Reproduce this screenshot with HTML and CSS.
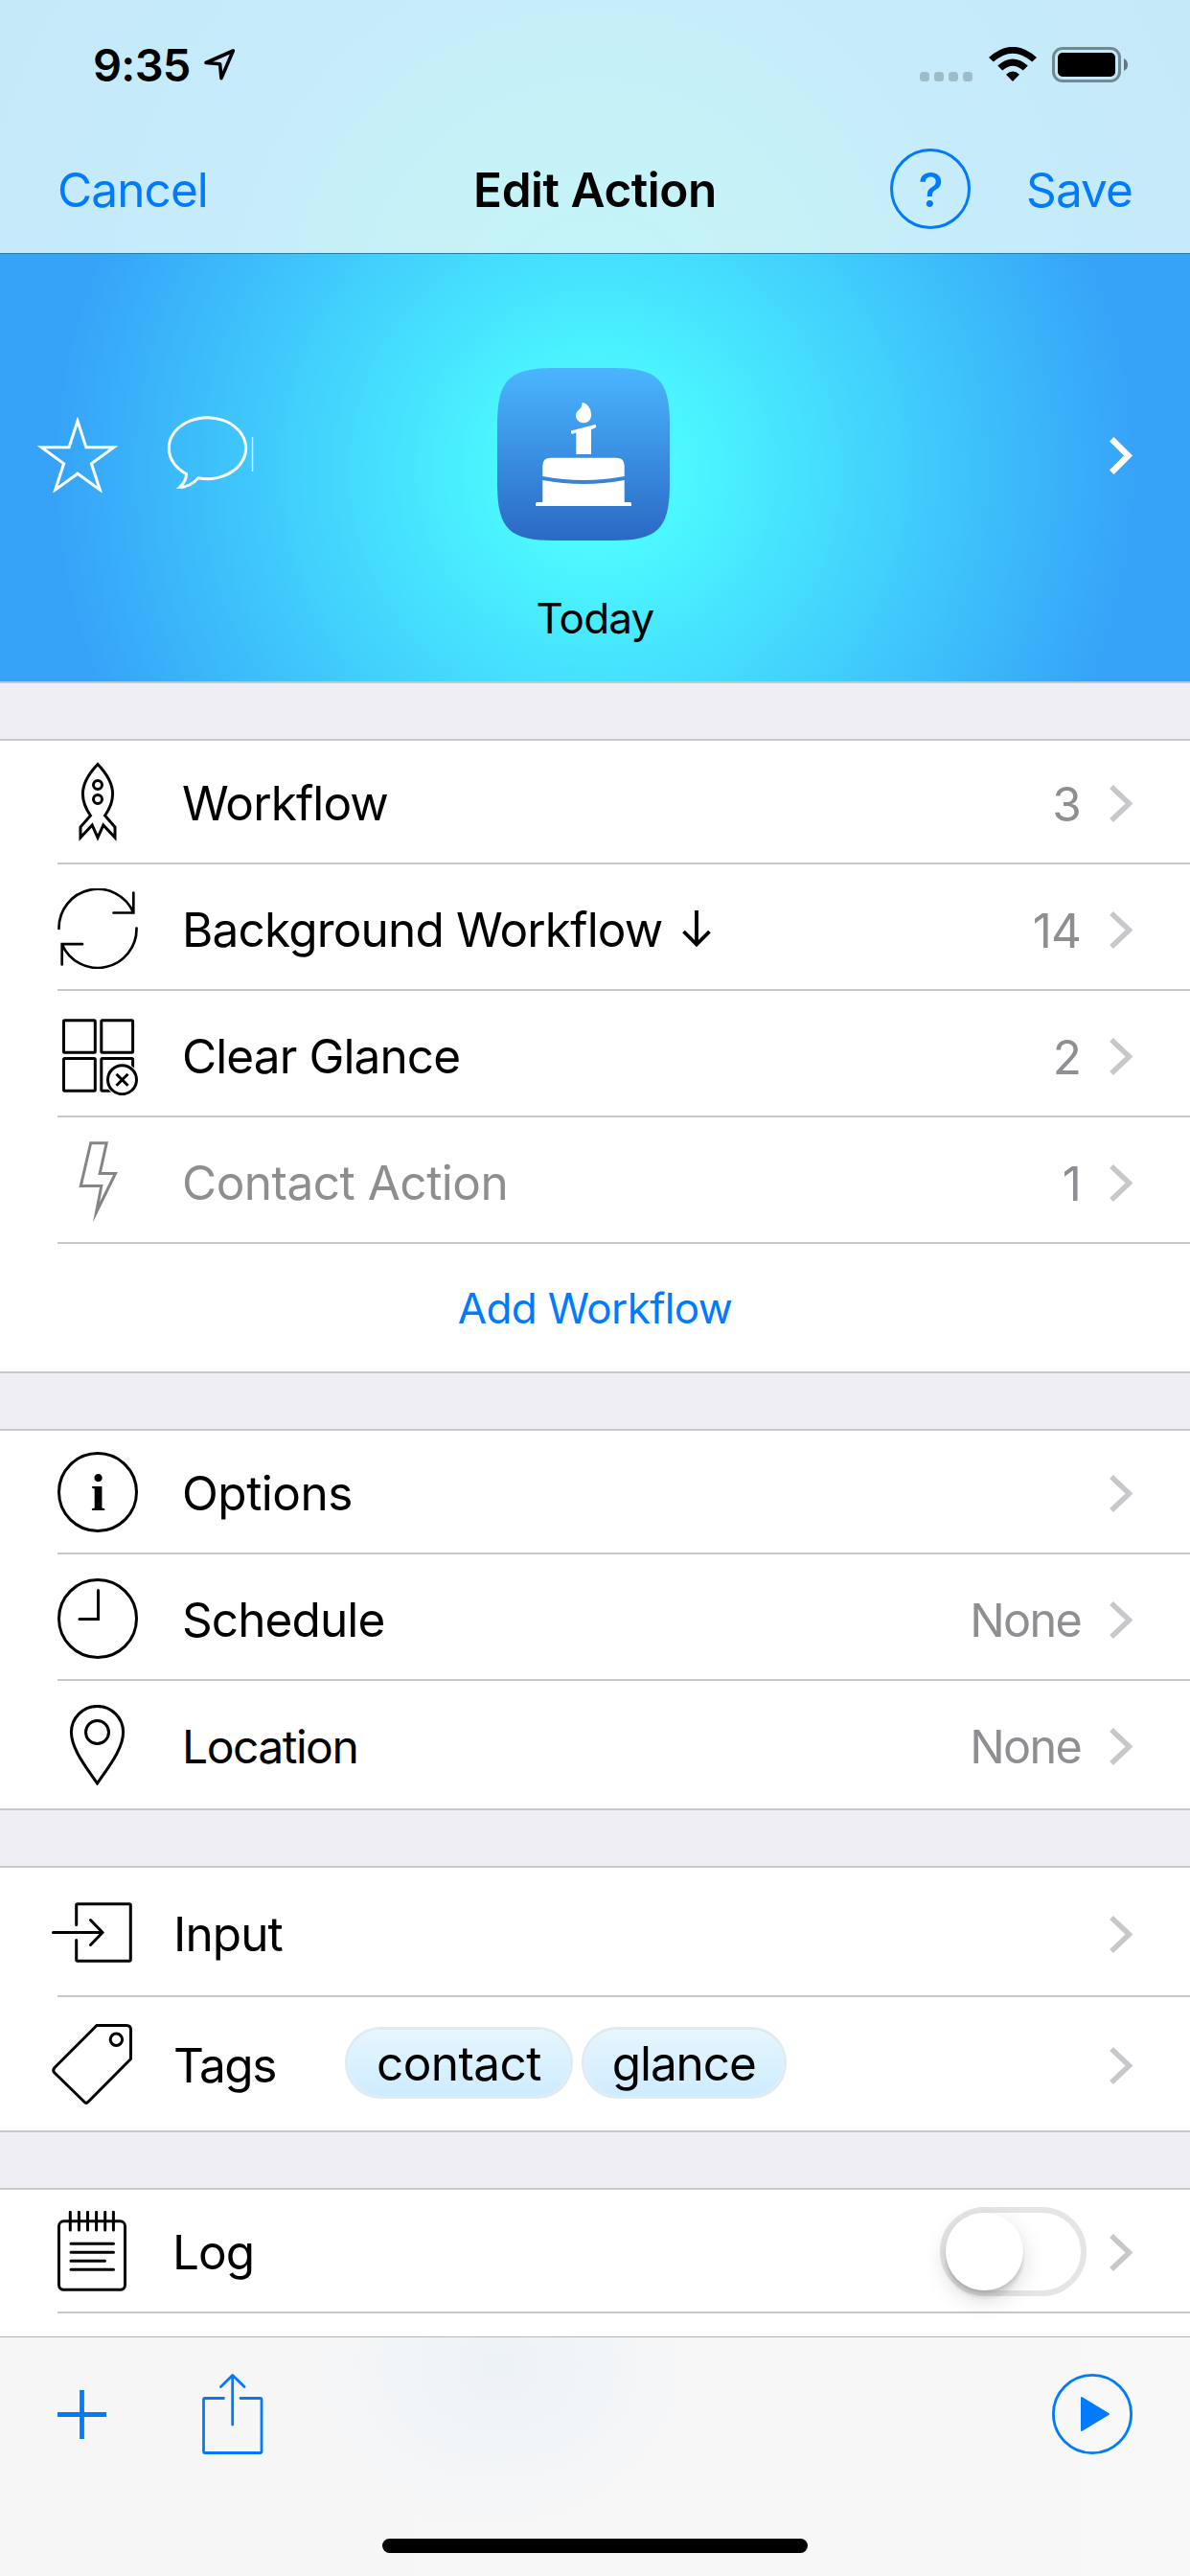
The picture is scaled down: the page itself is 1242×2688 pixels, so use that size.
FILE: index.html
```html
<!DOCTYPE html>
<html lang="en">
<head>
<meta charset="utf-8">
<title>Edit Action</title>
<link rel="stylesheet" href="styles.css">
</head>
<body>
<svg class="defs" width="0" height="0" aria-hidden="true">
  <symbol id="chevron" viewBox="0 0 24 39"><path d="M2 2 L20.5 19.5 L2 37" fill="none" stroke="currentColor" stroke-width="5.4"/></symbol>
</svg>
<div class="screen">
  <header class="top">
    <div class="status">
      <div class="clock">
        <span class="time">9:35</span>
        <svg class="locarrow" width="34" height="36" viewBox="0 0 34 36"><path d="M31.3 3 L3 15.5 L17.6 16.8 L19 31.6 Z" fill="none" stroke="#000" stroke-width="3.6" stroke-linejoin="round"/></svg>
      </div>
      <div class="indicators">
        <div class="dots"><i></i><i></i><i></i><i></i></div>
        <svg width="50" height="37" viewBox="0 0 50 37">
          <path d="M0 11 Q25 -11.5 50 11 L45.2 15.6 Q25 -2.200 4.800 15.600 Z"/>
          <path d="M9.200 19.600 Q25 5.500 40.800 19.600 L35.800 24.500 Q25 14.800 14.200 24.500 Z"/>
          <path d="M18 28.700 Q25 22.500 32 28.700 L25 36 Z"/>
        </svg>
        <svg width="80" height="38" viewBox="0 0 80 38">
          <rect x="1.500" y="1.500" width="69" height="34" rx="9.500" fill="none" stroke="#000" stroke-opacity=".42" stroke-width="3"/>
          <rect x="6" y="6" width="60" height="25" rx="5"/>
          <path d="M75 12 Q79 14 79 18.500 Q79 23 75 25 Z" fill-opacity=".5"/>
        </svg>
      </div>
    </div>
    <nav class="nav">
      <span class="link">Cancel</span>
      <h1 class="title">Edit Action</h1>
      <div class="nav-right">
        <span class="help">?</span>
        <span class="link save">Save</span>
      </div>
    </nav>
  </header>

  <section class="hero">
    <div class="hero-row">
      <svg class="star" width="84" height="79" viewBox="0 0 84 79"><path d="M42 4.300 L50.900 31.700 L79.800 31.700 L56.400 48.700 L65.300 76.100 L42 59.200 L18.700 76.100 L27.600 48.700 L4.200 31.700 L33.100 31.700 Z" fill="none" stroke="#fff" stroke-width="3" stroke-miterlimit="10"/></svg>
      <svg class="bubble" width="92" height="80" viewBox="0 0 92 80"><path d="M20.500 60.500 A40.200 32 0 1 1 33 64.800 Q24 74.500 13.500 74.500 Q20.500 68 20.500 60.500 Z" fill="none" stroke="#fff" stroke-width="3"/><path d="M89.500 22 V58" stroke="#fff" stroke-width="1.400"/></svg>
      <svg class="app" width="180" height="180" viewBox="0 0 180 180">
        <defs><linearGradient id="sky" x1="0" y1="0" x2="0" y2="1"><stop offset="0" stop-color="#4ab6ff"/><stop offset="1" stop-color="#2a69c5"/></linearGradient></defs>
        <path d="M60 0 H120 C168 0 180 12 180 60 V120 C180 168 168 180 120 180 H60 C12 180 0 168 0 120 V60 C0 12 12 0 60 0 Z" fill="url(#sky)"/>
        <g fill="#fff">
          <path d="M88.500 36 C95 37 98 43 98 49 C98 54.500 94.500 57.300 90.200 57.300 C85.500 57.300 82 54 82 49.500 C82 43.500 89.500 43 88.500 36 Z"/>
          <path d="M77 65.500 L102 59 Q103.500 59 103 62 L98 64.200 V90 H82.300 V67.500 L78 69 Q76.500 67.500 77 65.500 Z"/>
          <path d="M47.300 113 V102 Q47.300 93.700 56 93.700 H124 Q132.700 93.700 132.700 102 V113 Q90 121 47.300 113 Z"/>
          <path d="M47.300 117 Q90 124.800 132.700 117 V140 H138.500 Q140 140 140 141.500 V144 H40 V141.500 Q40 140 41.500 140 H47.300 Z"/>
        </g>
      </svg>
      <svg class="hero-chev" width="24" height="39" viewBox="0 0 24 39"><path d="M2.300 2.300 L19.500 19.500 L2.300 36.700" fill="none" stroke="#fff" stroke-width="6.400"/></svg>
    </div>
    <div class="hero-name">Today</div>
  </section>

  <main class="list">
    <section class="group">
      <div class="row first">
        <svg class="icon" viewBox="0 0 84 84"><path d="M42 2.500 C30 15 26.400 25 26.400 33.500 C26.400 42 29.500 49 34.500 56 L24 68 V79 L36.200 66 L42 79 L47.800 66 L60 79 V68 L49.500 56 C54.500 49 57.600 42 57.600 33.500 C57.600 25 54 15 42 2.500 Z"/><circle cx="42" cy="24" r="4.500"/><circle cx="42" cy="39" r="4.500"/></svg>
        <span class="label">Workflow</span><span class="value">3</span><svg class="chev"><use href="#chevron"/></svg>
      </div>
      <div class="row">
        <svg class="icon" viewBox="0 0 84 84"><path d="M1.500 42 A40.500 40.500 0 0 1 79.300 25.500 M79.300 4.500 V25.500 H58.500 M82.500 41.500 A40.500 40.500 0 0 1 4.700 58.200 M4.700 79.500 V58.200 H26" stroke-linecap="round" stroke-width="2.700"/></svg>
        <span class="label background">Background Workflow</span>
        <svg class="down" width="32" height="38" viewBox="0 0 32 38"><path d="M16 0 V35 M2.500 22 L16 35.500 L29.500 22" fill="none" stroke="#000" stroke-width="3.800"/></svg>
        <span class="value">14</span><svg class="chev"><use href="#chevron"/></svg>
      </div>
      <div class="row">
        <svg class="icon" viewBox="0 0 84 84"><rect x="6.500" y="5.700" width="32.800" height="33.500" rx="1"/><rect x="45.800" y="5.700" width="32.800" height="33.500" rx="1"/><rect x="6.500" y="45.500" width="32.800" height="33.800" rx="1"/><rect x="45.800" y="45.500" width="32.800" height="33.800" rx="1"/><circle cx="67.500" cy="67.700" r="15.500" fill="#fff" stroke="#fff" stroke-width="4"/><circle cx="67.500" cy="67.700" r="15"/><path d="M61.500 61.700 l12 12 M73.500 61.700 l-12 12"/></svg>
        <span class="label">Clear Glance</span><span class="value">2</span><svg class="chev"><use href="#chevron"/></svg>
      </div>
      <div class="row disabled">
        <svg class="icon" viewBox="0 0 84 84"><path d="M34.700 1.700 H51.200 L44.200 33.500 H60.500 L40.500 74 L45.800 46.500 H24.300 Z" stroke-miterlimit="12"/></svg>
        <span class="label wide">Contact Action</span><span class="value">1</span><svg class="chev"><use href="#chevron"/></svg>
      </div>
      <div class="row add"><span>Add Workflow</span></div>
    </section>

    <section class="group">
      <div class="row first">
        <svg class="icon" viewBox="0 0 84 84"><circle cx="42" cy="42" r="40.500"/><text x="42" y="61" class="info">i</text></svg>
        <span class="label wide">Options</span><span class="value"></span><svg class="chev"><use href="#chevron"/></svg>
      </div>
      <div class="row">
        <svg class="icon" viewBox="0 0 84 84"><circle cx="42" cy="42" r="40.500"/><path d="M42.500 12.500 V42.500 H23" stroke-linecap="round"/></svg>
        <span class="label">Schedule</span><span class="value none">None</span><svg class="chev"><use href="#chevron"/></svg>
      </div>
      <div class="row last">
        <svg class="icon" viewBox="0 0 84 84"><path d="M41.500 82 C30 65 14.400 46 14.400 28.500 A27.100 27.100 0 0 1 68.600 28.500 C68.600 46 53 65 41.500 82 Z"/><circle cx="41.500" cy="28.500" r="12"/></svg>
        <span class="label location">Location</span><span class="value none">None</span><svg class="chev"><use href="#chevron"/></svg>
      </div>
    </section>

    <section class="group shifted">
      <div class="row input">
        <svg class="icon" viewBox="0 0 84 84"><path d="M25.700 33.500 V13 Q25.700 11.700 27 11.700 H81 Q82.300 11.700 82.300 13 V70 Q82.300 71.300 81 71.300 H27 Q25.700 71.300 25.700 70 V49.500 M1.500 41.500 H53 M40.500 28.500 L53 41.500 L40.500 54.500" stroke-linecap="round"/></svg>
        <span class="label">Input</span><span class="value"></span><svg class="chev"><use href="#chevron"/></svg>
      </div>
      <div class="row tags">
        <svg class="icon" viewBox="0 0 84 84"><path d="M47 1.500 H78 Q82.500 1.500 82.500 6 V36.500 L38 81.300 Q36 83.300 34 81.300 L3 51 Q.500 48.500 3 45.500 Z"/><circle cx="67.400" cy="16.300" r="6.200"/></svg>
        <span class="label">Tags</span>
        <div class="pills"><span class="pill">contact</span><span class="pill narrow">glance</span></div>
        <svg class="chev"><use href="#chevron"/></svg>
      </div>
    </section>

    <section class="group cut">
      <div class="row first log">
        <svg class="icon" viewBox="0 0 84 84"><rect x="1.500" y="10.800" width="69" height="71.500" rx="5"/><path d="M13.300 1.300 V20 M22.400 1.300 V20 M31.500 1.300 V20 M40.600 1.300 V20 M49.700 1.300 V20 M58.400 1.300 V20 M14 34.300 H58.500 M14 43.300 H58.500 M14 52.300 H49.500 M14 61.300 H58.500" stroke-linecap="round"/></svg>
        <span class="label">Log</span><span class="switch"><span class="knob"></span></span><svg class="chev"><use href="#chevron"/></svg>
      </div>
    </section>
  </main>

  <footer class="toolbar">
    <div class="tools">
      <svg width="51" height="51" viewBox="0 0 51 51"><path d="M25.500 0 V51 M0 25.500 H51" stroke="#007aff" stroke-width="4.800"/></svg>
      <svg class="share" width="64" height="84" viewBox="0 0 64 84"><path d="M22.500 25.500 H3 Q1.500 25.500 1.500 27 V81 Q1.500 82.500 3 82.500 H60.500 Q62 82.500 62 81 V27 Q62 25.500 60.500 25.500 H40 M31.700 53 V2 M19.500 13.500 L31.700 1.500 L44 13.500" fill="none" stroke="#007aff" stroke-width="2.800" stroke-linecap="round" stroke-linejoin="round"/></svg>
      <svg class="play" width="84" height="84" viewBox="0 0 84 84"><circle cx="42" cy="42" r="40.600" fill="none" stroke="#007aff" stroke-width="2.800"/><path d="M31 25 L59 42 L31 59 Z" fill="#007aff" stroke="#007aff" stroke-width="2" stroke-linejoin="round"/></svg>
    </div>
    <div class="home"></div>
  </footer>
</div>
</body>
</html>
```
FILE: styles.css
```css
* { box-sizing: border-box; }
body {
  margin: 0;
  background: #efeef4;
  font-family: Inter, "Liberation Sans", sans-serif;
  font-size: 49.5px;
  line-height: 60px;
  letter-spacing: -0.9px;
  color: #000;
}
.defs { position: absolute; }
svg { display: block; flex: none; }
.screen {
  width: 1242px;
  height: 2688px;
  display: flex;
  flex-direction: column;
  overflow: hidden;
}

/* Status bar and navigation */
.top {
  height: 265px;
  flex: none;
  border-bottom: 1px solid #2b7ea6;
  background: radial-gradient(circle at 621px 330px, #c4f6f7 0, #c6f0f8 280px, #c6ebfa 420px, #c5e8f9 800px);
}
.status {
  height: 132px;
  display: flex;
  justify-content: space-between;
  padding: 49px 64px 0 97px;
}
.clock { display: flex; gap: 13px; height: 38px; align-items: center; }
.time { font-weight: 600; font-size: 47px; letter-spacing: -0.7px; line-height: 38px; }
.indicators { display: flex; height: 38px; align-items: flex-start; }
.dots { display: flex; gap: 5px; padding-top: 26px; margin-right: 17px; }
.dots i { width: 10px; height: 10px; border-radius: 3.5px; background: rgba(0, 0, 0, 0.2); }
.dots + svg { margin-right: 16px; }
.nav {
  height: 130px;
  display: grid;
  grid-template-columns: 1fr auto 1fr;
  align-items: center;
  padding: 0 60px;
}
.link { color: #007aff; padding-top: 1px; }
.title { margin: 0; font-size: 49.5px; font-weight: 600; padding-top: 2px; letter-spacing: -0.45px; }
.nav-right { display: flex; justify-content: flex-end; align-items: center; gap: 58px; }
.help {
  width: 84px;
  height: 84px;
  border: 3px solid #007aff;
  border-radius: 50%;
  color: #007aff;
  font-weight: 500;
  text-align: center;
  line-height: 80px;
}

/* Coloured banner */
.hero {
  height: 448px;
  flex: none;
  padding-top: 119px;
  border-bottom: 2px solid #c8c7cc;
  background: radial-gradient(circle at 621px 226px, #4cfaff 0, #4cf9ff 85px, #36a3f8 565px);
}
.hero-row { height: 180px; display: flex; align-items: center; padding: 0 60px 0 39px; }
.bubble { margin-left: 51px; }
.app { margin-left: 253px; }
.hero-chev { margin-left: auto; margin-top: 2px; }
.hero-name { margin-top: 51px; text-align: center; font-size: 44px; letter-spacing: -0.8px; }

/* Grouped rows */
.list { flex: 1; min-height: 0; overflow: hidden; padding-top: 58px; }
.group {
  background: #fff;
  border-top: 2px solid #c8c7cc;
  border-bottom: 2px solid #c8c7cc;
  margin-bottom: 58px;
}
.row {
  height: 132px;
  margin-left: 60px;
  padding: 4px 60px 0 0;
  border-bottom: 2px solid #c8c7cc;
  display: flex;
  align-items: center;
}
.row.first { height: 129px; padding-top: 1px; }
.icon { width: 84px; height: 84px; fill: none; stroke: #000; stroke-width: 3; }
.icon .info {
  font: bold 55px "Liberation Serif", serif;
  text-anchor: middle;
  fill: #000;
  stroke: none;
}
.label { margin-left: 46px; padding-top: 2px; white-space: nowrap; }
.label.wide { letter-spacing: -0.5px; }
.label.background { letter-spacing: -0.83px; }
.label.location { font-size: 48px; letter-spacing: -1.5px; padding-top: 3px; }
.down { margin-left: 20px; }
.value { margin-left: auto; padding-top: 3px; color: #8e8e93; }
.value.none { font-size: 48.5px; letter-spacing: -1.7px; }
.chev { width: 24px; height: 39px; margin: 3px 0 0 30px; color: #c7c7cc; }
.disabled .label { color: #8e8e8e; }
.disabled .icon { stroke: #858585; }
.row.add {
  height: 133px;
  margin-left: 0;
  padding: 1px 0 0;
  border: 0;
  justify-content: center;
  color: #007aff;
  font-size: 44px;
  letter-spacing: -0.65px;
}
.row.last { height: 133px; border: 0; padding-bottom: 3px; }
.shifted .icon { margin-left: -6px; }
.shifted .label { margin-left: 43px; }
.row.input { height: 135px; padding-top: 2px; }
.row.tags { height: 139px; border: 0; padding-top: 1px; }
.tags .label { letter-spacing: -1.4px; }
.pills { display: flex; gap: 9px; margin-left: 72px; margin-right: auto; margin-top: -3px; }
.pill {
  height: 75px;
  padding: 0 30px;
  border: 3px solid #dfebf0;
  border-radius: 37px;
  background: linear-gradient(#e6f6fe, #ceecfe) padding-box;
  line-height: 70px;
  letter-spacing: -0.6px;
}
.pill.narrow { padding: 0 29px; letter-spacing: -1.1px; }
.cut { border-bottom: 0; height: 300px; margin: 0; }
.log .label { margin-left: 36px; }
.switch {
  width: 153px;
  height: 93px;
  margin-left: auto;
  border: 6px solid #e5e5e5;
  border-radius: 47px;
}
.switch + .chev { margin-left: 24px; }
.knob {
  display: block;
  width: 81px;
  height: 81px;
  border-radius: 50%;
  background: #fff;
  box-shadow: 0 9px 24px rgba(0, 0, 0, 0.15), 0 9px 3px rgba(0, 0, 0, 0.06), 0 3px 3px rgba(0, 0, 0, 0.1);
}

/* Bottom bar */
.toolbar {
  height: 250px;
  flex: none;
  border-top: 1px solid #b2b2b2;
  background:
    radial-gradient(ellipse 210px 170px at 520px 30px, #ebf2f6 0, rgba(239, 244, 247, 0.7) 50%, rgba(247, 247, 247, 0) 100%),
    linear-gradient(90deg, #f6f6f6, #f8f8f8);
}
.tools { height: 160px; display: flex; align-items: center; padding: 0 60px; }
.share { margin-left: 100px; }
.play { margin-left: auto; }
.home { width: 444px; height: 15px; margin: 50px auto 0; border-radius: 8px; background: #000; }
```
